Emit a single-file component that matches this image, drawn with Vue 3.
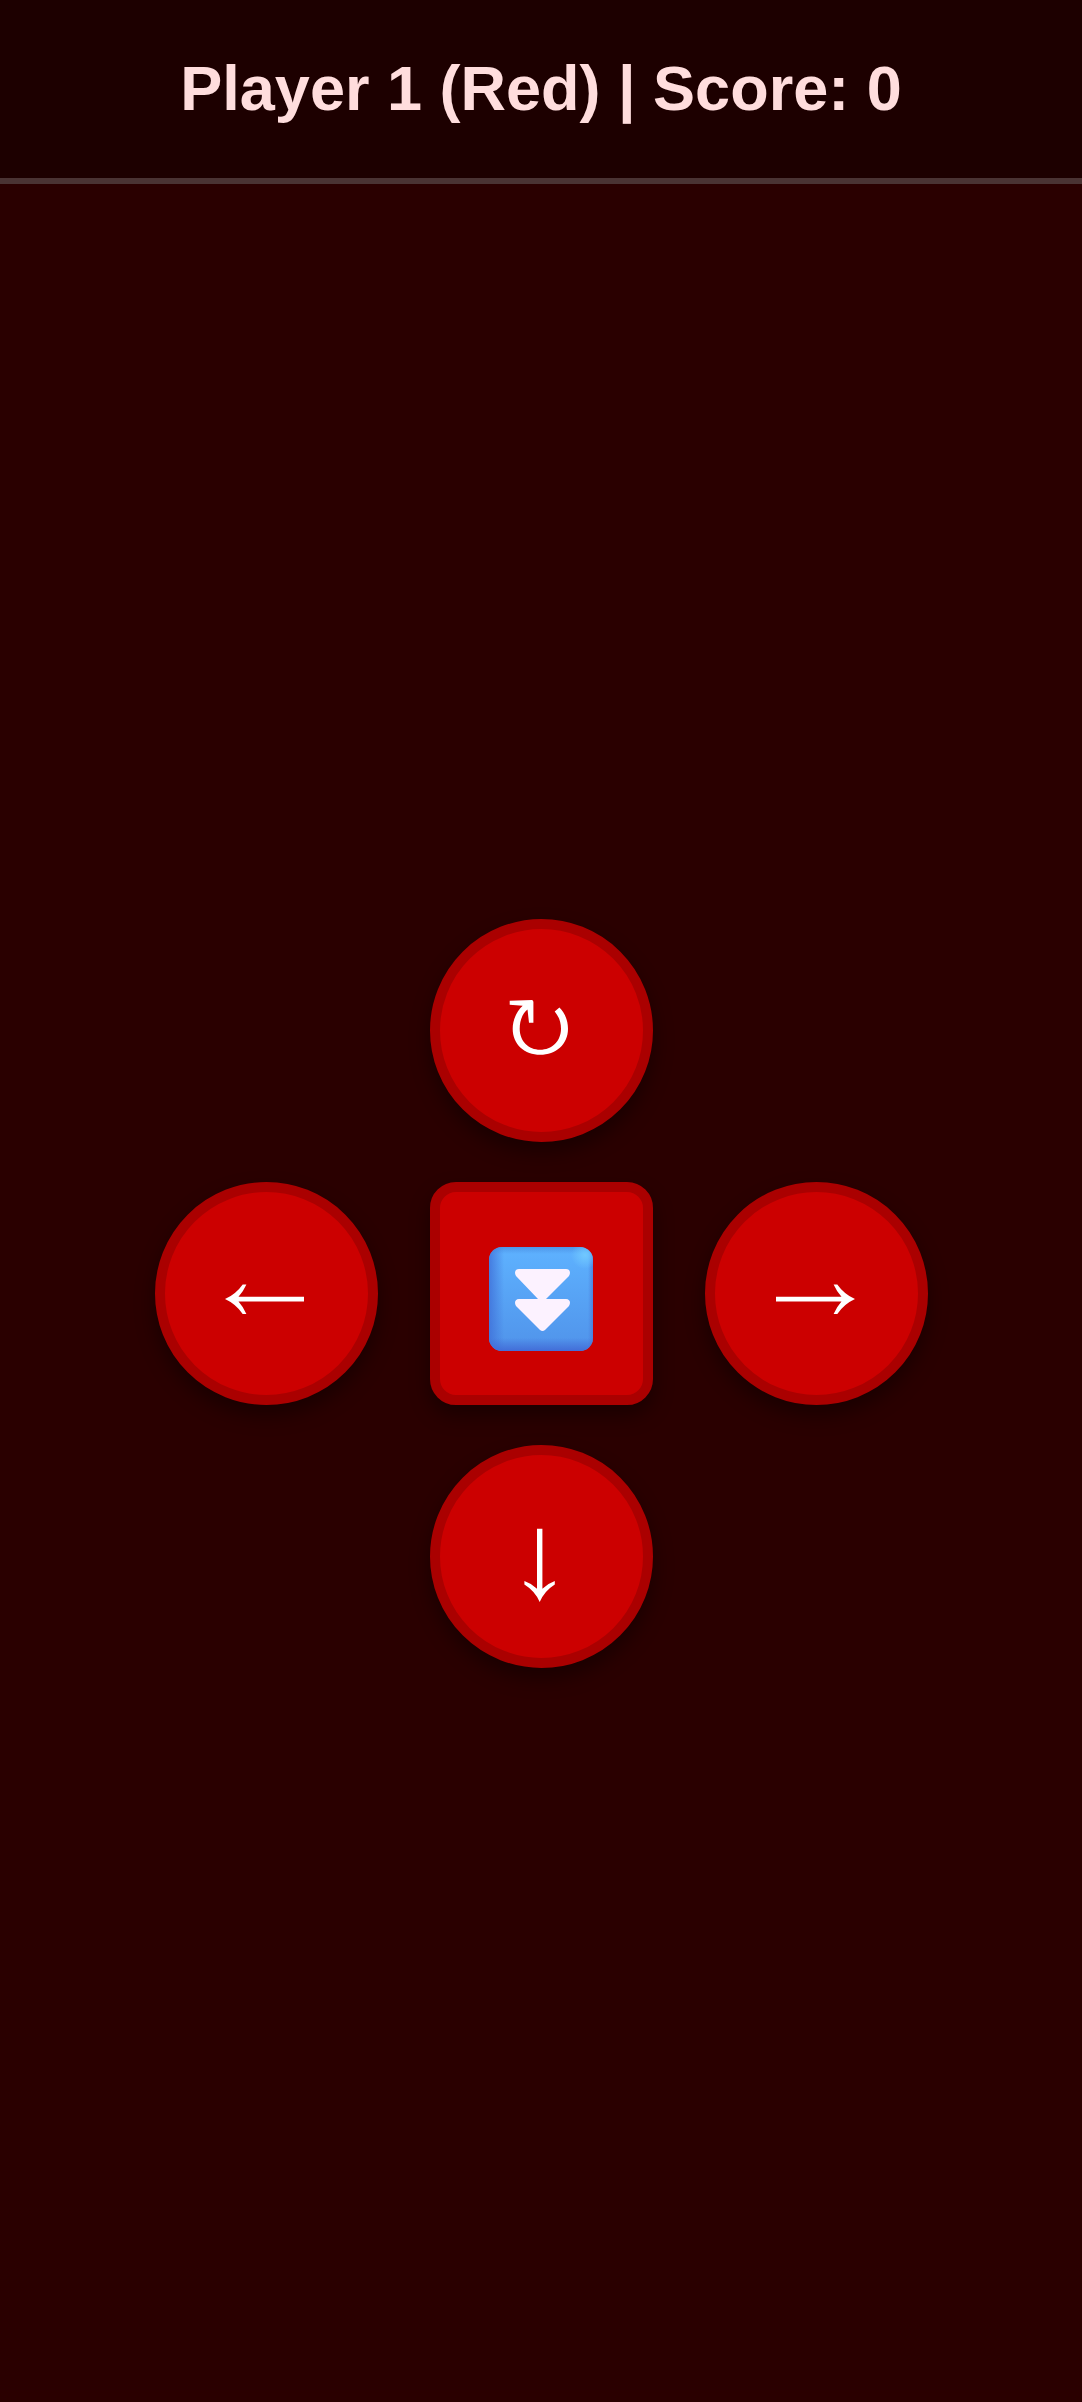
<script setup>
import { ref } from 'vue';

const playerName = ref('Player 1 (Red)');
const score = ref(0);
const lastAction = ref('');

const controls = [
  {
    action: 'rotate',
    label: 'Rotate',
    path: 'M28.7 30.8L51 30Q52.4 30.3 52.4 32V52.8H48L46.5 39.5C41.2 43.8 38.7 50.8 38.7 58.8C38.7 71.3 47.7 79.8 59.2 79.8C70.7 79.8 80 71.3 80 58.8C80 51.8 77.7 46.3 73.7 41.5L78.4 37.5C83.7 42.8 87 50.3 87 58.8C87 74.8 74.7 84.8 59.2 84.8C43.7 84.8 31.7 74.8 31.7 58.8C31.7 49.8 35.7 41.3 41.7 35.8L28.7 34.8Z',
  },
  {
    action: 'left',
    label: 'Move left',
    path: 'M19 66Q30 61 36.7 51.4H40.4Q37.5 58 32.5 63.7H98V68.4H32.5Q37.5 74 40.4 81H36.7Q30 71 19 66Z',
  },
  { action: 'drop', label: 'Hard drop' },
  {
    action: 'right',
    label: 'Move right',
    path: 'M99 66Q88 61 81.3 51.4H77.6Q80.5 58 85.5 63.7H20V68.4H85.5Q80.5 74 77.6 81H81.3Q88 71 99 66Z',
  },
  {
    action: 'down',
    label: 'Move down',
    path: 'M58.7 106Q54 95 43.4 88.5V85.1Q50.5 87.5 56 92.8V32.8H61.4V92.8Q67 87.5 73.8 85.1V88.5Q63.4 95 58.7 106Z',
  },
];

const sendAction = (action) => {
  lastAction.value = action;
};
</script>

<template>
  <div class="controller">
    <header class="status">{{ playerName }} | Score: {{ score }}</header>

    <main class="area">
      <div class="pad">
        <button
          v-for="control in controls"
          :key="control.action"
          type="button"
          class="btn"
          :class="control.action"
          :aria-label="control.label"
          @click="sendAction(control.action)"
        >
          <svg v-if="control.path" class="arrow" viewBox="0 0 120 120">
            <path fill="currentColor" :d="control.path" />
          </svg>
          <svg v-else class="dropIcon" viewBox="0 0 104 104">
            <defs>
              <linearGradient id="face" x1="0" y1="0" x2="0" y2="1">
                <stop offset="0" stop-color="#5eb2ff" />
                <stop offset="1" stop-color="#5093ea" />
              </linearGradient>
              <linearGradient id="leftEdge" x1="0" y1="0" x2="1" y2="0">
                <stop offset="0" stop-color="#3f6fd8" stop-opacity="0.8" />
                <stop offset="1" stop-color="#3f6fd8" stop-opacity="0" />
              </linearGradient>
              <linearGradient id="rightEdge" x1="1" y1="0" x2="0" y2="0">
                <stop offset="0" stop-color="#4978d6" stop-opacity="0.7" />
                <stop offset="1" stop-color="#4978d6" stop-opacity="0" />
              </linearGradient>
              <linearGradient id="bottomEdge" x1="0" y1="1" x2="0" y2="0">
                <stop offset="0" stop-color="#4169d6" stop-opacity="0.9" />
                <stop offset="1" stop-color="#4169d6" stop-opacity="0" />
              </linearGradient>
              <linearGradient id="topEdge" x1="0" y1="0" x2="0" y2="1">
                <stop offset="0" stop-color="#4583d8" stop-opacity="0.6" />
                <stop offset="1" stop-color="#4583d8" stop-opacity="0" />
              </linearGradient>
              <radialGradient id="shine">
                <stop offset="0" stop-color="#73cbff" stop-opacity="0.9" />
                <stop offset="1" stop-color="#73cbff" stop-opacity="0" />
              </radialGradient>
              <clipPath id="tile">
                <rect width="104" height="104" rx="13" />
              </clipPath>
            </defs>
            <g clip-path="url(#tile)">
              <rect width="104" height="104" fill="url(#face)" />
              <rect width="15" height="104" fill="url(#leftEdge)" />
              <rect x="99" width="5" height="104" fill="url(#rightEdge)" />
              <rect width="104" height="7" fill="url(#topEdge)" />
              <rect y="91" width="104" height="13" fill="url(#bottomEdge)" />
              <circle cx="96" cy="8" r="14" fill="url(#shine)" />
            </g>
            <path
              fill="#fcf2ff"
              d="M30 22H77C81 22 82 26 80 29L57 52H77C81 52 82 56 80 59L56 83Q53.5 85 51 83L27 59C25 56 26 52 30 52H49L27 29C25 26 26 22 30 22Z"
            />
          </svg>
        </button>
      </div>
    </main>
  </div>
</template>

<style>
body {
  margin: 0;
  background: #2a0000;
}
</style>

<style scoped>
.controller {
  display: flex;
  flex-direction: column;
  min-height: 100vh;
  background: #2a0000;
  font-family: 'Liberation Sans', Arial, sans-serif;
}

.status {
  padding: 52px 20px 54px;
  border-bottom: 6px solid #4a3333;
  background: #1d0000;
  color: #ffdddd;
  font-size: 63px;
  font-weight: bold;
  line-height: 72px;
  text-align: center;
}

.area {
  display: flex;
  flex: 1;
  align-items: center;
  justify-content: center;
}

.pad {
  display: grid;
  grid-template-areas:
    '. rotate .'
    'left drop right'
    '. down .';
  gap: 40px 52px;
}

.btn {
  display: flex;
  align-items: center;
  justify-content: center;
  box-sizing: border-box;
  width: 223px;
  height: 223px;
  padding: 0;
  border: 10px solid #aa0000;
  border-radius: 50%;
  background: #cc0000;
  box-shadow: 0 10px 20px rgba(0, 0, 0, 0.4);
  color: white;
  cursor: pointer;
}

.btn:active {
  background: #aa0000;
}

.rotate {
  grid-area: rotate;
}

.left {
  grid-area: left;
}

.drop {
  grid-area: drop;
  border-radius: 26px;
}

.right {
  grid-area: right;
}

.down {
  grid-area: down;
}

.arrow {
  width: 120px;
  height: 120px;
}

.dropIcon {
  width: 104px;
  height: 104px;
  margin-top: 12px;
}
</style>
